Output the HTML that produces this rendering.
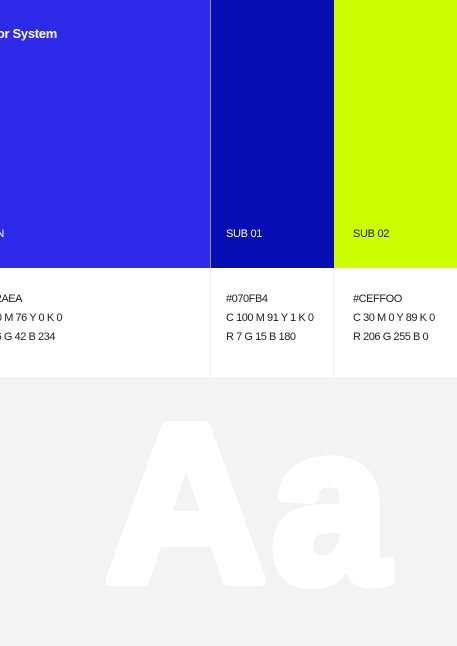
<!DOCTYPE html>
<html><head><meta charset="utf-8"><style>
*{margin:0;padding:0;box-sizing:border-box}
html,body{width:457px;height:646px;overflow:hidden}
body{background:#f3f3f3;position:relative;font-family:"Liberation Sans",sans-serif}
div,span{position:absolute}
.t{white-space:nowrap;font-size:11px;color:#222;line-height:14px;letter-spacing:-0.45px}
.l{white-space:nowrap;font-size:11px;line-height:14px;letter-spacing:-0.3px}
</style></head><body>
<div style="left:0;top:0;width:210px;height:268px;background:#2E2AEA"></div>
<div style="left:210px;top:0;width:1px;height:268px;background:#8f8cf4"></div>
<div style="left:211px;top:0;width:123px;height:268px;background:#070FB4"></div>
<div style="left:334px;top:0;width:123px;height:268px;background:#CEFF00"></div>
<div style="left:0;top:268px;width:457px;height:109px;background:#fff"></div>
<div style="left:210px;top:268px;width:1px;height:109px;background:#f2f2f2"></div>
<div style="left:333px;top:268px;width:1px;height:109px;background:#f2f2f2"></div>

<span style="right:400px;top:26px;font-size:13px;font-weight:bold;color:#fff;white-space:nowrap;line-height:16px;letter-spacing:-0.3px">Color System</span>
<span class="l" style="right:453px;top:227px;color:#fff">MAIN</span>
<span class="l" style="left:226px;top:227px;color:#fff">SUB 01</span>
<span class="l" style="left:353px;top:227px;color:#222">SUB 02</span>

<span class="t" style="right:435px;top:292px">#2E2AEA</span>
<span class="t" style="right:395px;top:311px">C 80 M 76 Y 0 K 0</span>
<span class="t" style="right:402px;top:330px">R 46 G 42 B 234</span>

<span class="t" style="left:226px;top:292px">#070FB4</span>
<span class="t" style="left:226px;top:311px">C 100 M 91 Y 1 K 0</span>
<span class="t" style="left:226px;top:330px">R 7 G 15 B 180</span>

<span class="t" style="left:353px;top:292px">#CEFFOO</span>
<span class="t" style="left:353px;top:311px">C 30 M 0 Y 89 K 0</span>
<span class="t" style="left:353px;top:330px">R 206 G 255 B 0</span>

<svg style="position:absolute;left:0;top:0" width="457" height="646">
<text x="106" y="580" font-family="Liberation Sans" font-weight="bold" font-size="222" fill="#fff" stroke="#fff" stroke-width="12" stroke-linejoin="round" textLength="160" lengthAdjust="spacingAndGlyphs">A</text>
<text x="272" y="581" font-family="Liberation Sans" font-weight="bold" font-size="222" fill="#fff" stroke="#fff" stroke-width="12" stroke-linejoin="round" textLength="116" lengthAdjust="spacingAndGlyphs">a</text>
</svg>
</body></html>
